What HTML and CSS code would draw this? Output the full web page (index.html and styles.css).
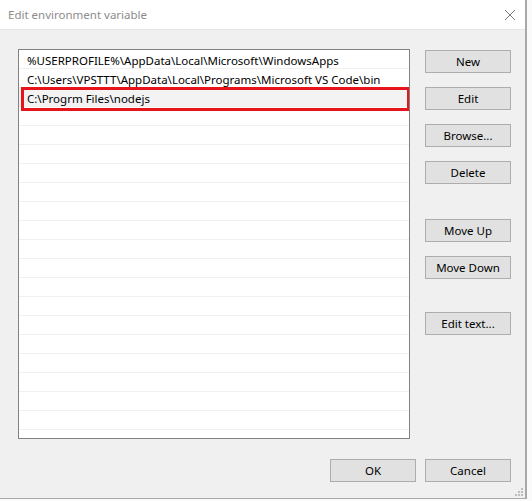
FILE: index.html
```html
<!DOCTYPE html>
<html lang="en">
<head>
    <meta charset="UTF-8">
    <title>Edit environment variable</title>
    <link rel="stylesheet" href="styles.css">
</head>
<body>

<div class="window">
    <header class="titlebar">
        <span class="title">Edit environment variable</span>
        <button class="close" type="button" aria-label="Close">
            <svg width="12" height="12" viewBox="0 0 12 12">
                <path d="M1 1 L11 11 M11 1 L1 11" stroke="#7a7a7a" stroke-width="1" fill="none"/>
            </svg>
        </button>
    </header>

    <main class="content">
        <ul class="path-list" id="pathList">
            <li>%USERPROFILE%\AppData\Local\Microsoft\WindowsApps</li>
            <li>C:\Users\VPSTTT\AppData\Local\Programs\Microsoft VS Code\bin</li>
            <li class="selected">C:\Progrm Files\nodejs</li>
        </ul>

        <div class="actions">
            <button type="button" class="btn">New</button>
            <button type="button" class="btn">Edit</button>
            <button type="button" class="btn">Browse...</button>
            <button type="button" class="btn">Delete</button>
            <button type="button" class="btn move-up">Move Up</button>
            <button type="button" class="btn">Move Down</button>
            <button type="button" class="btn edit-text">Edit text...</button>
        </div>
    </main>

    <footer class="dialog-footer">
        <button type="button" class="btn">OK</button>
        <button type="button" class="btn">Cancel</button>
        <svg class="grip" width="8" height="8" viewBox="0 0 8 8">
            <rect x="6" y="0" width="2" height="2" fill="#bdbdbd"/>
            <rect x="3" y="3" width="2" height="2" fill="#bdbdbd"/>
            <rect x="6" y="3" width="2" height="2" fill="#bdbdbd"/>
            <rect x="0" y="6" width="2" height="2" fill="#bdbdbd"/>
            <rect x="3" y="6" width="2" height="2" fill="#bdbdbd"/>
            <rect x="6" y="6" width="2" height="2" fill="#bdbdbd"/>
        </svg>
    </footer>
</div>

<script>
    // pad the list with empty rows so the grid lines run to the bottom
    const pathList = document.getElementById('pathList');
    for (let i = 0; i < 18; i++) {
        pathList.appendChild(document.createElement('li'));
    }
</script>

</body>
</html>
```

FILE: styles.css
```css
body {
    margin: 0;
    padding: 0;
    background: #fafafa;
    font-family: 'Segoe UI', 'Noto Sans', sans-serif;
    font-size: 11.5px;
    color: #000;
}
.window {
    width: 525px;
    height: 498px;
    background: #f0f0f0;
    border-right: 2px solid #a8a8a8;
    border-bottom: 1px solid #a8a8a8;
    display: flex;
    flex-direction: column;
    position: relative;
}
.titlebar {
    height: 29px;
    background: #fff;
    border-bottom: 1px solid #e6e6e6;
    display: flex;
    align-items: center;
    justify-content: space-between;
    padding: 0 0 0 8px;
}
.title {
    color: #8c8c8c;
    margin-top: 0;
}
.close {
    width: 30px;
    height: 29px;
    border: none;
    background: none;
    padding: 0;
    display: flex;
    align-items: center;
    justify-content: center;
}
.content {
    display: flex;
    padding: 19px 0 0 18px;
}
.path-list {
    list-style: none;
    margin: 0;
    padding: 0;
    width: 390px;
    height: 388px;
    border: 1px solid #828282;
    background: #fff;
    overflow: hidden;
}
.path-list li {
    height: 16px;
    padding: 2px 0 0 8px;
    line-height: 18px;
    border-bottom: 1px solid #f0f0f0;
    white-space: nowrap;
    position: relative;
}
.path-list li.selected {
    background: #f3f3f3;
}
/* red marker drawn over the selected entry */
.path-list li.selected::after {
    content: '';
    position: absolute;
    left: 2px;
    right: -1px;
    top: -1px;
    bottom: -5px;
    border: 3px solid #e8141c;
}
.actions {
    display: flex;
    flex-direction: column;
    gap: 14px;
    margin-left: 15px;
    padding-top: 1px;
}
.btn {
    width: 86px;
    height: 23px;
    padding: 0;
    background: #e1e1e1;
    border: 1px solid #adadad;
    font-family: inherit;
    font-size: 11.5px;
    color: #000;
}
.actions .move-up {
    margin-top: 21px;
}
.actions .edit-text {
    margin-top: 19px;
}
.dialog-footer {
    display: flex;
    justify-content: flex-end;
    gap: 9px;
    padding: 20px 14px 0 0;
}
.grip {
    position: absolute;
    right: 2px;
    bottom: 2px;
}
```
